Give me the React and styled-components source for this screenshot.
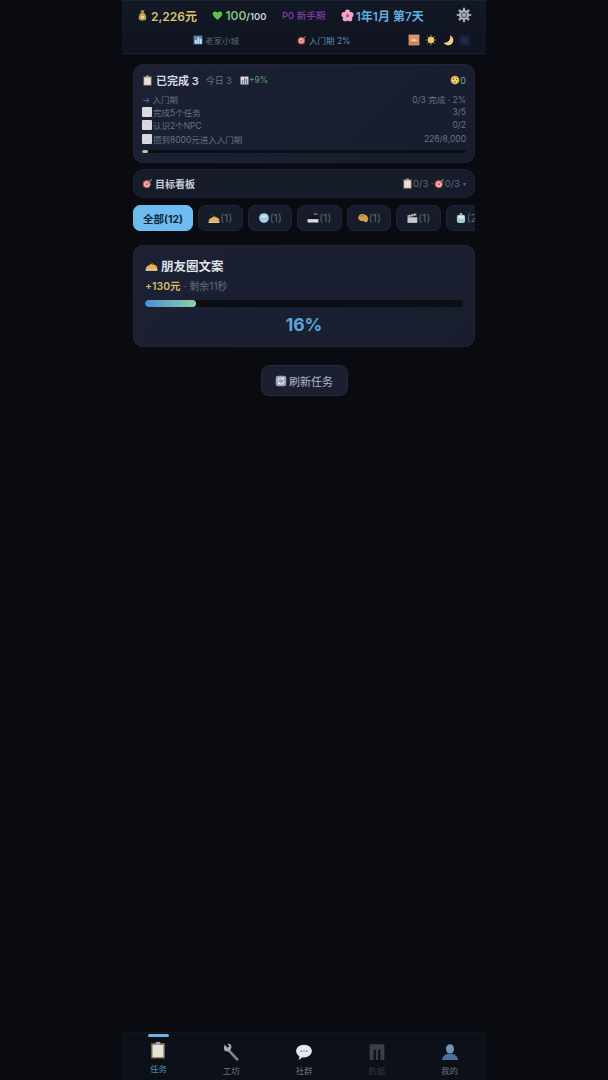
import React from 'react'
import styled, { createGlobalStyle } from 'styled-components'

const GlobalStyle = createGlobalStyle`
  html, body {
    margin: 0;
    padding: 0;
    background: #090b11;
    font-family: Inter, "Noto Sans CJK SC", sans-serif;
  }
  * { box-sizing: border-box; }
`

const Phone = styled.div`
  width: 364px;
  height: 1080px;
  margin: 0 auto;
  display: flex;
  flex-direction: column;
  background: #090b11;
`

const Header = styled.header`
  height: 54px;
  flex: none;
  padding: 4px 14px 0 15px;
  background: linear-gradient(180deg, #131825 0%, #0f1420 100%);
  border-top: 1px solid #1b2434;
  border-bottom: 1px solid #1a2333;
`

const StatRow = styled.div`
  display: flex;
  align-items: center;
  gap: 15.5px;
  height: 20px;
`

const Stat = styled.span`
  display: inline-flex;
  align-items: center;
  gap: ${p => p.$gap || 3}px;
  font-size: ${p => p.$size || 12}px;
  font-weight: ${p => p.$weight || 600};
  color: ${p => p.$color};
  white-space: nowrap;
`

const Small = styled.span`
  font-size: 9.5px;
  color: #c9d1dc;
`

const GearSlot = styled.span`
  display: flex;
  margin-left: auto;
`

const InfoRow = styled.div`
  display: flex;
  align-items: center;
  height: 20px;
  margin-top: 5px;
  padding-left: 56px;
`

const InfoItem = styled.span`
  display: inline-flex;
  align-items: center;
  gap: 2px;
  font-size: 8.5px;
  color: ${p => p.$color};
  width: ${p => p.$width}px;
`

const Scenes = styled.div`
  display: flex;
  gap: 4px;
  margin-left: auto;
  margin-right: 1px;
`

const SceneButton = styled.span`
  width: 13px;
  height: 13px;
  display: flex;
  align-items: center;
  justify-content: center;
`

const Main = styled.main`
  flex: 1;
  padding: 10px 11px 0;
  display: flex;
  flex-direction: column;
  min-height: 0;
`

const ProgressCard = styled.section`
  height: 99px;
  padding: 7px 8px 0;
  border-radius: 10px;
  background: linear-gradient(135deg, #1b2133 0%, #181d2d 100%);
  border: 1px solid #1e2537;
`

const TitleRow = styled.div`
  display: flex;
  align-items: center;
  height: 16px;
`

const CardTitle = styled.span`
  display: inline-flex;
  align-items: center;
  gap: 3px;
  font-size: 11px;
  font-weight: 600;
  color: #d6dae1;
`

const Muted = styled.span`
  font-size: 9px;
  color: #687183;
  margin-left: ${p => p.$left || 0}px;
`

const Gain = styled.span`
  display: inline-flex;
  align-items: center;
  margin-left: 8px;
  font-size: 8.5px;
  color: #5d9a68;
`

const Mood = styled.span`
  display: inline-flex;
  align-items: center;
  margin-left: auto;
  font-size: 9px;
  color: #6fae70;
`

const MilestoneList = styled.div`
  margin-top: 5px;
`

const Milestone = styled.div`
  display: flex;
  align-items: center;
  justify-content: space-between;
  height: ${p => p.$height || 13.5}px;
  font-size: 8.5px;
  color: #697285;
`

const MilestoneLabel = styled.span`
  display: inline-flex;
  align-items: center;
  gap: 1px;
`

const Checkbox = styled.span`
  width: 10px;
  height: 10px;
  border-radius: 1px;
  background: #d8d9dc;
`

const Track = styled.div`
  height: ${p => p.$height}px;
  border-radius: ${p => p.$height / 2}px;
  background: #0b0e15;
  overflow: hidden;
  margin-top: ${p => p.$top || 0}px;
`

const Fill = styled.div`
  height: 100%;
  border-radius: inherit;
  background: ${p => p.$bg};
`

const GoalBar = styled.div`
  display: flex;
  align-items: center;
  justify-content: space-between;
  height: 29px;
  margin-top: 6px;
  padding: 0 8px;
  border-radius: 10px;
  background: #171c2b;
  border: 1px solid #1a2132;
`

const GoalTitle = styled.span`
  display: inline-flex;
  align-items: center;
  gap: 2px;
  font-size: 10px;
  font-weight: 600;
  color: #c4c9d2;
`

const GoalStats = styled.span`
  display: inline-flex;
  align-items: center;
  font-size: 9.5px;
  color: #5f6879;
`

const Caret = styled.span`
  margin-left: 3px;
  font-size: 6px;
`

const ChipScroller = styled.div`
  display: flex;
  gap: 5px;
  margin-top: 7px;
  overflow: hidden;
  flex: none;
`

const Chip = styled.span`
  flex: none;
  width: ${p => p.$width || 44.5}px;
  height: 26px;
  display: inline-flex;
  align-items: center;
  justify-content: center;
  border-radius: 7px;
  font-size: 10.5px;
  font-weight: ${p => (p.$active ? 700 : 400)};
  color: ${p => (p.$active ? '#15263a' : '#5f6879')};
  background: ${p => (p.$active ? '#6cbcf0' : '#171c2a')};
  border: 1px solid ${p => (p.$active ? '#6cbcf0' : '#1e2536')};
`

const TaskCard = styled.section`
  height: 102px;
  margin-top: 14px;
  padding: 10px 11px 0;
  border-radius: 10px;
  background: linear-gradient(135deg, #1b2133 0%, #191e2f 100%);
  border: 1px solid #202738;
`

const TaskTitle = styled.div`
  display: flex;
  align-items: center;
  gap: 3px;
  height: 18px;
  font-size: 12.5px;
  font-weight: 600;
  color: #dfe2e8;
`

const Reward = styled.div`
  margin-top: 4px;
  height: 14px;
  font-size: 10px;
  color: #646d7e;
  display: flex;
  align-items: center;
  gap: 3px;
`

const Money = styled.span`
  font-size: 10.5px;
  font-weight: 600;
  color: #d9b968;
`

const Percent = styled.div`
  margin-top: 7px;
  text-align: center;
  font-size: 17.5px;
  font-weight: 700;
  color: #5aa6dc;
`

const RefreshRow = styled.div`
  display: flex;
  justify-content: center;
  margin-top: 18px;
`

const RefreshButton = styled.button`
  width: 87px;
  height: 31px;
  display: flex;
  align-items: center;
  justify-content: center;
  gap: 2px;
  padding: 0;
  border-radius: 8px;
  border: 1px solid #222a3b;
  background: #1a2030;
  color: #b4bac5;
  font-family: inherit;
  font-size: 11px;
`

const Nav = styled.nav`
  height: 48px;
  flex: none;
  display: flex;
  background: #0c1018;
  border-top: 1px solid #111621;
`

const NavItem = styled.div`
  position: relative;
  flex: 1;
  display: flex;
  flex-direction: column;
  align-items: center;
  padding-top: ${p => (p.$active ? 8 : 10)}px;
  font-size: 8.5px;
  color: ${p => (p.$active ? '#4f8eb8' : p.$dim ? '#2f3440' : '#6a7280')};
`

const ActiveMark = styled.span`
  position: absolute;
  top: 1px;
  left: 50%;
  width: 21px;
  height: 3px;
  margin-left: -10.5px;
  border-radius: 2px;
  background: #6cb6e0;
`

const NavLabel = styled.span`
  margin-top: 4px;
  line-height: 12px;
`

const Icon = ({ size = 12, children }) => (
  <svg width={size} height={size} viewBox="0 0 16 16" style={{ flex: 'none' }}>{children}</svg>
)

const MoneyBag = ({ size }) => (
  <Icon size={size}>
    <path d="M5 .8h6l-1.500 3h-3z" fill="#c9a45e" />
    <path d="M6.200 3.800h3.600C12 5.500 13.500 8.500 13.500 11.500c0 3-2 3.700-5.500 3.700s-5.500-.7-5.500-3.700c0-3 1.500-6 3.700-7.700z" fill="#c49a55" />
    <circle cx="8" cy="10.500" r="2.400" fill="#f0dca0" />
  </Icon>
)

const Heart = ({ size }) => (
  <Icon size={size}>
    <path d="M8 14.500C3 10.500 1 8 1 5.500 1 3.200 2.800 2 4.500 2 6 2 7.300 2.800 8 4.200 8.700 2.800 10 2 11.500 2 13.200 2 15 3.200 15 5.500 15 8 13 10.500 8 14.500z" fill="#5cc24e" />
  </Icon>
)

const Blossom = ({ size }) => (
  <Icon size={size}>
    <g fill="#f2a6c4">
      <circle cx="8" cy="3.800" r="3.200" />
      <circle cx="3.800" cy="7" r="3.200" />
      <circle cx="12.200" cy="7" r="3.200" />
      <circle cx="5.300" cy="12" r="3.200" />
      <circle cx="10.700" cy="12" r="3.200" />
    </g>
    <circle cx="8" cy="8.200" r="1.800" fill="#d8527f" />
  </Icon>
)

const Gear = ({ size }) => (
  <Icon size={size}>
    <g stroke="#a4a8ae" strokeWidth="2.200">
      <path d="M8 .8v14.400M.8 8h14.400M2.900 2.900l10.200 10.200M13.100 2.900L2.900 13.100" />
    </g>
    <circle cx="8" cy="8" r="5" fill="#b0b3b8" />
    <circle cx="8" cy="8" r="3.200" fill="#6d7178" />
    <circle cx="8" cy="8" r="1.700" fill="#a9acb2" />
  </Icon>
)

const Cityscape = ({ size }) => (
  <Icon size={size}>
    <rect x="1" y="1" width="14" height="14" fill="#5b86b8" />
    <path d="M3 14V8h3v6zM7 14V4h3v10zM11 14V6h3v8z" fill="#cfe0f0" />
  </Icon>
)

const Target = ({ size }) => (
  <Icon size={size}>
    <circle cx="7" cy="9" r="6" fill="#d8494d" />
    <circle cx="7" cy="9" r="3.800" fill="#e8e4e4" />
    <circle cx="7" cy="9" r="2" fill="#d8494d" />
    <path d="M7 9l7-7" stroke="#6fae8a" strokeWidth="1.500" />
  </Icon>
)

const Sunrise = ({ size }) => (
  <Icon size={size}>
    <rect x="1" y="1" width="14" height="14" fill="#d8a070" />
    <rect x="1" y="1" width="14" height="6" fill="#d99270" />
    <path d="M4.500 10a3.500 3.500 0 0 1 7 0z" fill="#f6d98c" />
    <rect x="1" y="10" width="14" height="5" fill="#c98560" />
  </Icon>
)

const Sun = ({ size }) => (
  <Icon size={size}>
    <g stroke="#b89040" strokeWidth="1.200">
      <path d="M8 1v14M1 8h14M3 3l10 10M13 3L3 13" />
    </g>
    <circle cx="8" cy="8" r="4.200" fill="#eacb66" />
  </Icon>
)

const Moon = ({ size }) => (
  <Icon size={size}>
    <path d="M10.500 1.500A7 7 0 1 1 2 11.500 7.500 7.500 0 0 0 10.500 1.500z" fill="#eed27c" />
  </Icon>
)

const NightSky = ({ size }) => (
  <Icon size={size}>
    <rect x="1" y="1" width="14" height="14" rx="3" fill="#181f33" />
    <circle cx="8" cy="8" r="4" fill="#232b44" />
  </Icon>
)

const Clipboard = ({ size }) => (
  <Icon size={size}>
    <rect x="2" y="2" width="12" height="13.500" fill="#8d7a5c" />
    <rect x="3.200" y="3.500" width="9.600" height="10.800" fill="#e6e2d6" />
    <rect x="6" y=".8" width="4" height="2.400" fill="#9fa4aa" />
  </Icon>
)

const Chart = ({ size }) => (
  <Icon size={size}>
    <rect x="1" y="1" width="14" height="14" fill="#dfe5ea" />
    <rect x="3" y="7" width="2.500" height="7" fill="#4fa868" />
    <rect x="6.800" y="3" width="2.500" height="11" fill="#c8506e" />
    <rect x="10.500" y="5" width="2.500" height="9" fill="#4f86c8" />
  </Icon>
)

const DizzyFace = ({ size }) => (
  <Icon size={size}>
    <circle cx="8" cy="8" r="7" fill="#e0b040" />
    <path d="M3 7.500a5 2.600 0 0 1 10 0 5 5.500 0 0 1-10 0z" fill="#ead48a" />
    <circle cx="5.500" cy="7" r="1" fill="#6a4c1c" />
    <circle cx="10.500" cy="7" r="1" fill="#6a4c1c" />
    <path d="M6 11h4" stroke="#6a4c1c" strokeWidth="1.200" />
  </Icon>
)

const WritingHand = ({ size }) => (
  <Icon size={size}>
    <path d="M.8 12.500c.4-2.800 2.200-4.200 4.200-4.700L8.500 5l1.800 1.500 3 1.500c1.300.7 1.900 2.500 1.900 4.500z" fill="#eeb04a" />
    <path d="M.8 12.500h14.400v2H.8z" fill="#f7e3b4" />
    <path d="M4.500 3l5 4" stroke="#4a3820" strokeWidth="1.200" />
  </Icon>
)

const Bubble = ({ size }) => (
  <Icon size={size}>
    <circle cx="8" cy="8" r="6.500" fill="#a9cde4" />
    <path d="M4 6a4.500 3 0 0 1 8 0 4.500 2.500 0 0 1-8 0z" fill="#d5e8f4" />
  </Icon>
)

const Laptop = ({ size }) => (
  <Icon size={size}>
    <path d="M2 3h12v6.500H2z" fill="#14161c" />
    <path d="M9 2.800h5" stroke="#c8ccd2" strokeWidth="1" />
    <path d="M.8 9.500h14.400V14H.8z" fill="#d8dade" />
  </Icon>
)

const Palette = ({ size }) => (
  <Icon size={size}>
    <path d="M7 2.500c4.500 0 8 3.500 8 6.500 0 3-1.500 4.500-3.500 4.500-1.700 0-2-1.500-3.500-1.500S5 12 3.500 11C1.500 9.500 1 7 2.500 5 3.500 3.500 5 2.500 7 2.500z" fill="#cfa04e" />
    <circle cx="5" cy="6" r="1" fill="#6a7fa8" />
    <circle cx="8" cy="5" r="1" fill="#8a5a3e" />
  </Icon>
)

const Clapper = ({ size }) => (
  <Icon size={size}>
    <path d="M2 7h13v7.500H2z" fill="#c9c9cc" />
    <path d="M1.500 4.500l12-3 .8 2.800-12 3z" fill="#8d8f94" />
    <path d="M4 3.900l1 2.700M7.500 3l1 2.700M11 2.200l1 2.700" stroke="#e8e8ea" strokeWidth="1" />
  </Icon>
)

const RiceBowl = ({ size }) => (
  <Icon size={size}>
    <rect x="6.500" y="1.500" width="3" height="2" fill="#b8d8d4" />
    <rect x="2.500" y="3.500" width="11" height="11" rx="3" fill="#a9ccc8" />
    <rect x="4" y="5" width="8" height="4" rx="1.500" fill="#dcecea" />
  </Icon>
)

const Refresh = ({ size }) => (
  <Icon size={size}>
    <rect x="1" y="1" width="14" height="14" rx="3" fill="#9aa6b6" />
    <path d="M4 8a4 4 0 0 1 7-2.600M12 8a4 4 0 0 1-7 2.600" fill="none" stroke="#eef1f5" strokeWidth="1.500" />
    <path d="M11.800 2.800v3.400H8.600zM4.200 13.200V9.800h3.200z" fill="#eef1f5" />
  </Icon>
)

const Wrench = ({ size }) => (
  <Icon size={size}>
    <path d="M13.500 14.500L6 6.500" stroke="#7f858c" strokeWidth="2.400" strokeLinecap="round" />
    <path d="M2.500 1.500l2.200 2.400L6.600 3 5 .8c2.400-.5 3.900 1.400 3.300 3.400L7 7.300 4.200 7.500C2 7.500.6 4.400 2.500 1.500z" fill="#a6abb1" />
  </Icon>
)

const ChatBubble = ({ size }) => (
  <Icon size={size}>
    <path d="M8 1.500c3.900 0 7 2.500 7 5.700s-3.100 5.700-7 5.700c-.6 0-1.200-.1-1.800-.2C5.400 14 4 14.800 3 14.800c.6-.8 1-1.800 1-2.900C2.200 10.800 1 9.100 1 7.200 1 4 4.100 1.500 8 1.500z" fill="#e6e8ea" />
    <g fill="#8a8f96">
      <circle cx="5.500" cy="7.200" r=".8" />
      <circle cx="8" cy="7.200" r=".8" />
      <circle cx="10.500" cy="7.200" r=".8" />
    </g>
  </Icon>
)

const Building = ({ size }) => (
  <Icon size={size}>
    <path d="M1.500 1h13v14h-3.500V6H9v9H7V6H5v9H1.500z" fill="#3a3f47" />
  </Icon>
)

const Person = ({ size }) => (
  <Icon size={size}>
    <ellipse cx="8" cy="5.200" rx="3.600" ry="4.200" fill="#7393b8" />
    <path d="M1 15c0-3.500 3-5 5-5.500h4c2 .5 5 2 5 5.500z" fill="#4d7099" />
  </Icon>
)

const milestones = [
  { label: '完成5个任务', value: '3/5' },
  { label: '认识2个NPC', value: '0/2' },
  { label: '攒到8000元进入入门期', value: '226/8,000' },
]

const chips = [
  { Glyph: WritingHand, count: '(1)' },
  { Glyph: Bubble, count: '(1)' },
  { Glyph: Laptop, count: '(1)' },
  { Glyph: Palette, count: '(1)' },
  { Glyph: Clapper, count: '(1)' },
  { Glyph: RiceBowl, count: '(2)' },
]

const navItems = [
  { label: '任务', Glyph: Clipboard, active: true },
  { label: '工坊', Glyph: Wrench },
  { label: '社群', Glyph: ChatBubble },
  { label: '数据', Glyph: Building, dim: true },
  { label: '我的', Glyph: Person },
]

export default function App() {
  return (
    <>
      <GlobalStyle />
      <Phone>
        <Header>
          <StatRow>
            <Stat $color="#dcc272" $gap={3}><MoneyBag size={11} />2,226元</Stat>
            <Stat $color="#7fc27a" $gap={2}><Heart size={11} /><span>100<Small>/100</Small></span></Stat>
            <Stat $color="#7d3fa0" $size={9.5} $weight={500}>P0 新手期</Stat>
            <Stat $color="#62aee0" $gap={2}><Blossom size={13} />1年1月 第7天</Stat>
            <GearSlot><Gear size={16} /></GearSlot>
          </StatRow>
          <InfoRow>
            <InfoItem $color="#5d6678" $width={104}><Cityscape size={10} />老家小城</InfoItem>
            <InfoItem $color="#5f8eb0"><Target size={10} />入门期 2%</InfoItem>
            <Scenes>
              <SceneButton><Sunrise size={12} /></SceneButton>
              <SceneButton><Sun size={12} /></SceneButton>
              <SceneButton><Moon size={12} /></SceneButton>
              <SceneButton><NightSky size={13} /></SceneButton>
            </Scenes>
          </InfoRow>
        </Header>

        <Main>
          <ProgressCard>
            <TitleRow>
              <CardTitle><Clipboard size={11} />已完成 3</CardTitle>
              <Muted $left={7}>今日 3</Muted>
              <Gain><Chart size={9} />+9%</Gain>
              <Mood><DizzyFace size={10} />0</Mood>
            </TitleRow>
            <MilestoneList>
              <Milestone $height={12}>
                <span>→ 入门期</span>
                <span>0/3 完成 · 2%</span>
              </Milestone>
              {milestones.map(m => (
                <Milestone key={m.label}>
                  <MilestoneLabel><Checkbox />{m.label}</MilestoneLabel>
                  <span>{m.value}</span>
                </Milestone>
              ))}
            </MilestoneList>
            <Track $height={3} $top={4}>
              <Fill $bg="#9fd2a0" style={{ width: '2%' }} />
            </Track>
          </ProgressCard>

          <GoalBar>
            <GoalTitle><Target size={11} />目标看板</GoalTitle>
            <GoalStats>
              <Clipboard size={11} />0/3 · <Target size={11} />0/3<Caret>▾</Caret>
            </GoalStats>
          </GoalBar>

          <ChipScroller>
            <Chip $active $width={60}>全部(12)</Chip>
            {chips.map(({ Glyph, count }, i) => (
              <Chip key={i}><Glyph size={12} />{count}</Chip>
            ))}
          </ChipScroller>

          <TaskCard>
            <TaskTitle><WritingHand size={13} />朋友圈文案</TaskTitle>
            <Reward><Money>+130元</Money>· 剩余11秒</Reward>
            <Track $height={7} $top={8}>
              <Fill $bg="linear-gradient(90deg, #4a8edc, #8fd0a0)" style={{ width: '16%' }} />
            </Track>
            <Percent>16%</Percent>
          </TaskCard>

          <RefreshRow>
            <RefreshButton><Refresh size={12} />刷新任务</RefreshButton>
          </RefreshRow>
        </Main>

        <Nav>
          {navItems.map(({ label, Glyph, active, dim }) => (
            <NavItem key={label} $active={active} $dim={dim}>
              {active && <ActiveMark />}
              <Glyph size={18} />
              <NavLabel>{label}</NavLabel>
            </NavItem>
          ))}
        </Nav>
      </Phone>
    </>
  )
}
